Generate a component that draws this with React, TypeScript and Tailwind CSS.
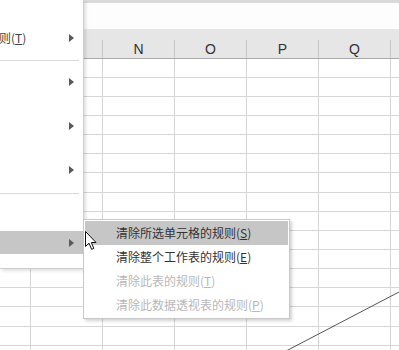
import React from 'react';

const FONT = { fontFamily: '"Noto Sans CJK SC", "Noto Sans", sans-serif' };

// row heights (border included) so lines fall at 77, 96, 115 ... 345
const ROWS = [
  'h-[19px]', 'h-[19px]', 'h-[19px]', 'h-[19px]', 'h-[19px]', 'h-[19px]', 'h-[20px]',
  'h-[19px]', 'h-[19px]', 'h-[19px]', 'h-[19px]', 'h-[19px]', 'h-[19px]', 'h-[20px]',
  'h-[19px]', 'h-[19px]',
];

const COLS = ['w-[31px]', 'w-[72px]', 'w-[72px]', 'w-[72px]', 'w-[72px]', 'w-[72px]'];
const LETTERS = ['', '', 'N', 'O', 'P', 'Q'];

function Arrow() {
  return (
    <svg width="5" height="8" viewBox="0 0 5 8" className="shrink-0">
      <path d="M0 0 L5 4 L0 8 Z" fill="#595959" />
    </svg>
  );
}

function Sheet() {
  return (
    <div className="flex flex-col">
      <div className="h-[3px] bg-[#d9d9d9]" />
      <div className="h-[26px] bg-[#fdfdfd]" />
      <div className="flex h-[30px] flex-col border-b border-[#ababab] bg-[#e6e6e6]">
        <div className="h-[11px]" />
        <div className="flex h-[18px]">
          {COLS.map((w, i) => (
            <div
              key={i}
              className={`${w} flex shrink-0 items-center justify-center border-r border-[#c6c6c6] text-[14px] text-[#333]`}
              style={{ fontFamily: '"Liberation Sans", Arial, sans-serif' }}
            >
              {LETTERS[i]}
            </div>
          ))}
          <div className="flex-1" />
        </div>
      </div>
      {ROWS.map((h, r) => (
        <div key={r} className={`${h} flex border-b border-[#d6d6d6] bg-white`}>
          {COLS.map((w, i) => (
            <div key={i} className={`${w} shrink-0 border-r border-[#d6d6d6]`} />
          ))}
          <div className="flex-1" />
        </div>
      ))}
    </div>
  );
}

function MainMenu() {
  return (
    <div
      className="absolute left-0 top-0 flex h-[269px] w-[84px] flex-col border-b border-r border-[#cdcdcd] bg-white text-[12px] text-[#444] shadow-[2px_2px_3px_rgba(0,0,0,0.12)]"
      style={FONT}
    >
      <div className="h-[27px]" />
      <div className="flex h-[22px] items-center justify-between pr-[9px]">
        <span className="ml-[-1px]">
          则(<u>T</u>)
        </span>
        <Arrow />
      </div>
      <div className="flex h-[22px] items-center pr-[4px]">
        <div className="h-px w-full bg-[#d9d9d9]" />
      </div>
      <div className="flex h-[22px] items-center justify-end pr-[9px]">
        <Arrow />
      </div>
      <div className="h-[22px]" />
      <div className="flex h-[22px] items-center justify-end pr-[9px]">
        <Arrow />
      </div>
      <div className="h-[22px]" />
      <div className="flex h-[22px] items-center justify-end pr-[9px]">
        <Arrow />
      </div>
      <div className="flex h-[24px] items-center pr-[4px]">
        <div className="h-px w-full bg-[#d9d9d9]" />
      </div>
      <div className="h-[26px]" />
      <div className="flex h-[23px] items-center justify-end bg-[#c6c6c6] pr-[9px]">
        <Arrow />
      </div>
    </div>
  );
}

function SubMenu() {
  const items = [
    { label: '清除所选单元格的规则', key: 'S', active: true, disabled: false },
    { label: '清除整个工作表的规则', key: 'E', active: false, disabled: false },
    { label: '清除此表的规则', key: 'T', active: false, disabled: true },
    { label: '清除此数据透视表的规则', key: 'P', active: false, disabled: true },
  ];
  return (
    <div
      className="absolute left-[83px] top-[219px] flex w-[207px] flex-col border border-[#c8c8c8] bg-white p-px text-[12px] shadow-[2px_2px_3px_rgba(0,0,0,0.18)]"
      style={FONT}
    >
      {items.map((it) => (
        <div
          key={it.key}
          className={`flex h-[24px] items-center pl-[31px] ${it.active ? 'bg-[#c6c6c6]' : ''} ${
            it.disabled ? 'text-[#b8b8b8]' : 'text-[#333]'
          }`}
        >
          {it.label}(<u>{it.key}</u>)
        </div>
      ))}
    </div>
  );
}

function Cursor() {
  return (
    <svg className="absolute left-[85px] top-[231px]" width="13" height="20" viewBox="0 0 13 20">
      <path
        d="M0.5 0.5 L0.5 15.5 L4 12.2 L6.6 18.3 L8.8 17.4 L6.3 11.5 L11 11.5 Z"
        fill="#fff"
        stroke="#111"
        strokeWidth="1"
        strokeLinejoin="miter"
      />
    </svg>
  );
}

export default function App() {
  return (
    <div className="relative h-[350px] w-[399px] overflow-hidden bg-white">
      <Sheet />
      <svg className="absolute left-0 top-0" width="399" height="350">
        <line x1="287" y1="350.5" x2="399" y2="292" stroke="#555" strokeWidth="1" />
      </svg>
      <MainMenu />
      <SubMenu />
      <Cursor />
    </div>
  );
}
